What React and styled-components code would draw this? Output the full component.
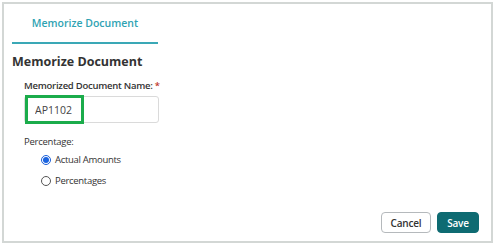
import styled, { createGlobalStyle } from 'styled-components';

const GlobalStyle = createGlobalStyle`
  html, body {
    margin: 0;
    padding: 0;
    background: #fff;
    font-family: "Open Sans", "Liberation Sans", sans-serif;
  }
`;

const Frame = styled.div`
  box-sizing: border-box;
  margin: 2px;
  width: 491px;
  height: 241px;
  border: 2px solid #d3d7d5;
  display: flex;
  flex-direction: column;
  padding: 0 12px 0 8px;
`;

const TabBar = styled.div`
  display: flex;
`;

const Tab = styled.div`
  width: 146px;
  height: 37px;
  display: flex;
  align-items: center;
  justify-content: center;
  font-size: 10.5px;
  font-weight: 600;
  color: #2fa3b3;
  border-bottom: 2px solid #3aa8b6;
  padding-bottom: 1px;
`;

const Heading = styled.h2`
  margin: 9px 0 0;
  font-size: 12.5px;
  font-weight: 700;
  color: #333;
  line-height: 18px;
`;

const Section = styled.div`
  padding-left: 12px;
  display: flex;
  flex-direction: column;
`;

const Label = styled.label`
  margin-top: ${p => p.$gap || '8px'};
  font-size: 9.5px;
  letter-spacing: -0.25px;
  font-weight: ${p => (p.$plain ? 400 : 600)};
  color: #333;
  line-height: 14px;
`;

const Required = styled.span`
  color: #c0392b;
  margin-left: 2px;
`;

const InputWrap = styled.div`
  position: relative;
  margin-top: 3px;
  width: 135px;
  height: 27px;
`;

const TextInput = styled.input`
  box-sizing: border-box;
  width: 100%;
  height: 100%;
  border: 1px solid #dadada;
  border-radius: 3px;
  padding: 0 10px;
  font-family: inherit;
  font-size: 10.5px;
  color: #444;
  outline: none;
`;

const Highlight = styled.div`
  position: absolute;
  left: 1px;
  top: -1px;
  width: 59px;
  height: 29px;
  box-sizing: border-box;
  border: 3px solid #1bac4b;
  pointer-events: none;
`;

const RadioGroup = styled.div`
  display: flex;
  flex-direction: column;
  gap: 6px;
  margin-top: 3px;
  padding-left: 17px;
`;

const RadioRow = styled.label`
  display: flex;
  align-items: center;
  gap: 4px;
  font-size: 9.5px;
  letter-spacing: -0.3px;
  color: #333;
  line-height: 15px;
`;

const RadioDot = styled.span`
  box-sizing: border-box;
  width: 10px;
  height: 10px;
  border-radius: 50%;
  border: 1px solid ${p => (p.$on ? '#1a5ed8' : '#555')};
  display: flex;
  align-items: center;
  justify-content: center;
  &::after {
    content: '';
    display: ${p => (p.$on ? 'block' : 'none')};
    width: 6px;
    height: 6px;
    border-radius: 50%;
    background: #1a63e0;
  }
`;

const Footer = styled.div`
  margin-top: auto;
  margin-bottom: 8px;
  display: flex;
  justify-content: flex-end;
  gap: 6px;
`;

const Button = styled.button`
  box-sizing: border-box;
  width: ${p => (p.$primary ? '42px' : '50px')};
  height: 21px;
  padding: 0;
  border-radius: 4px;
  font-family: inherit;
  font-size: 10px;
  letter-spacing: -0.2px;
  font-weight: 600;
  border: 1px solid ${p => (p.$primary ? '#0e6b72' : '#b5b9bc')};
  background: ${p => (p.$primary ? '#0e6b72' : '#fff')};
  color: ${p => (p.$primary ? '#fff' : '#333')};
  cursor: pointer;
`;

export default function App() {
  return (
    <>
      <GlobalStyle />
      <Frame>
        <TabBar>
          <Tab>Memorize Document</Tab>
        </TabBar>
        <Heading>Memorize Document</Heading>
        <Section>
          <Label>
            Memorized Document Name:<Required>*</Required>
          </Label>
          <InputWrap>
            <TextInput defaultValue="AP1102" />
            <Highlight />
          </InputWrap>
          <Label $gap="12px" $plain>Percentage:</Label>
          <RadioGroup>
            <RadioRow>
              <RadioDot $on />
              Actual Amounts
            </RadioRow>
            <RadioRow>
              <RadioDot />
              Percentages
            </RadioRow>
          </RadioGroup>
        </Section>
        <Footer>
          <Button>Cancel</Button>
          <Button $primary>Save</Button>
        </Footer>
      </Frame>
    </>
  );
}
